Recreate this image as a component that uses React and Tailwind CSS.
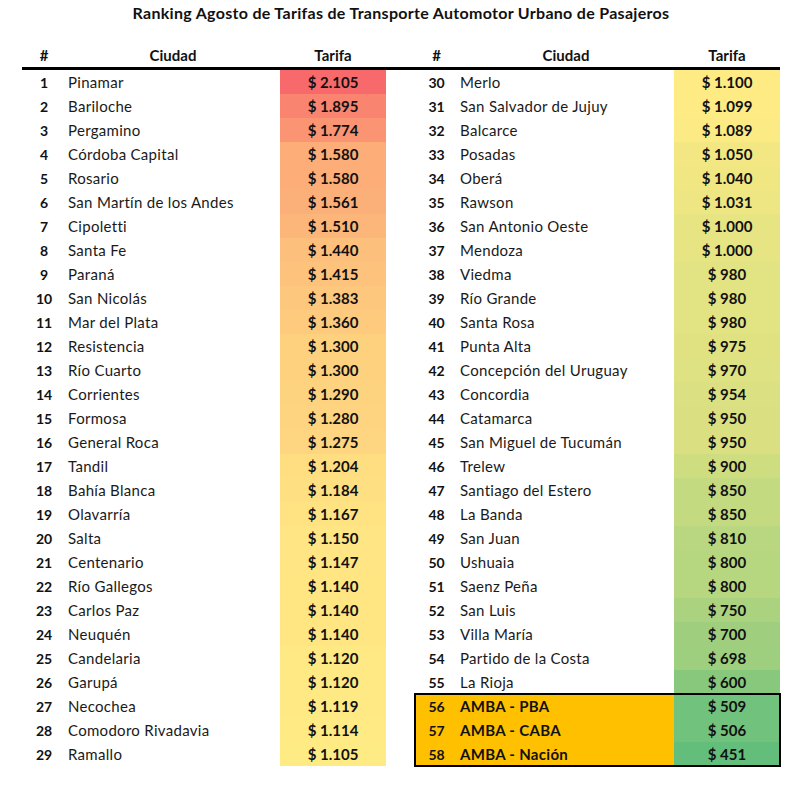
import React from "react";

const data = [
  [1, "Pinamar", 2105],
  [2, "Bariloche", 1895],
  [3, "Pergamino", 1774],
  [4, "Córdoba Capital", 1580],
  [5, "Rosario", 1580],
  [6, "San Martín de los Andes", 1561],
  [7, "Cipoletti", 1510],
  [8, "Santa Fe", 1440],
  [9, "Paraná", 1415],
  [10, "San Nicolás", 1383],
  [11, "Mar del Plata", 1360],
  [12, "Resistencia", 1300],
  [13, "Río Cuarto", 1300],
  [14, "Corrientes", 1290],
  [15, "Formosa", 1280],
  [16, "General Roca", 1275],
  [17, "Tandil", 1204],
  [18, "Bahía Blanca", 1184],
  [19, "Olavarría", 1167],
  [20, "Salta", 1150],
  [21, "Centenario", 1147],
  [22, "Río Gallegos", 1140],
  [23, "Carlos Paz", 1140],
  [24, "Neuquén", 1140],
  [25, "Candelaria", 1120],
  [26, "Garupá", 1120],
  [27, "Necochea", 1119],
  [28, "Comodoro Rivadavia", 1114],
  [29, "Ramallo", 1105],
  [30, "Merlo", 1100],
  [31, "San Salvador de Jujuy", 1099],
  [32, "Balcarce", 1089],
  [33, "Posadas", 1050],
  [34, "Oberá", 1040],
  [35, "Rawson", 1031],
  [36, "San Antonio Oeste", 1000],
  [37, "Mendoza", 1000],
  [38, "Viedma", 980],
  [39, "Río Grande", 980],
  [40, "Santa Rosa", 980],
  [41, "Punta Alta", 975],
  [42, "Concepción del Uruguay", 970],
  [43, "Concordia", 954],
  [44, "Catamarca", 950],
  [45, "San Miguel de Tucumán", 950],
  [46, "Trelew", 900],
  [47, "Santiago del Estero", 850],
  [48, "La Banda", 850],
  [49, "San Juan", 810],
  [50, "Ushuaia", 800],
  [51, "Saenz Peña", 800],
  [52, "San Luis", 750],
  [53, "Villa María", 700],
  [54, "Partido de la Costa", 698],
  [55, "La Rioja", 600],
  [56, "AMBA - PBA", 509],
  [57, "AMBA - CABA", 506],
  [58, "AMBA - Nación", 451],
];

const MIN = 451;
const MAX = 2105;
const MID = 1102.5;
const RED = [248, 105, 107];
const YEL = [255, 235, 132];
const GRN = [99, 190, 123];

function mix(a, b, t) {
  return a.map((v, i) => Math.round(v + (b[i] - v) * t));
}

function colorFor(v) {
  let c;
  if (v >= MID) c = mix(YEL, RED, (v - MID) / (MAX - MID));
  else c = mix(YEL, GRN, (MID - v) / (MID - MIN));
  return `rgb(${c[0]},${c[1]},${c[2]})`;
}

function fmt(v) {
  const s = String(v);
  if (s.length > 3) return "$ " + s.slice(0, s.length - 3) + "." + s.slice(-3);
  return "$ " + s;
}

const font = { fontFamily: "Lato, 'Open Sans', sans-serif" };

function Row({ n, city, v, amba, right }) {
  return (
    <div
      className={
        right
          ? "grid grid-cols-[43px_216px_106px] h-[24px] items-center"
          : "grid grid-cols-[44px_214px_106px] h-[24px] items-center"
      }
    >
      <div
        className={
          "h-full flex items-center justify-center text-[14px] font-bold text-[#111] " +
          (amba ? "bg-[#FFC000]" : "")
        }
      >
        {n}
      </div>
      <div
        className={
          "h-full flex items-center pl-[2px] text-[15px] tracking-[0.3px] text-[#1a1a1a] whitespace-nowrap " +
          (amba ? "bg-[#FFC000] font-bold text-[#111]" : "font-normal")
        }
      >
        {city}
      </div>
      <div
        className="h-full flex items-center justify-center text-[15px] font-bold text-[#111]"
        style={{ backgroundColor: colorFor(v) }}
      >
        {fmt(v)}
      </div>
    </div>
  );
}

export default function App() {
  const left = data.slice(0, 29);
  const rightNormal = data.slice(29, 55);
  const amba = data.slice(55);
  return (
    <div className="w-[802px] h-[788px] bg-white" style={font}>
      <div className="h-[44px] pt-[2px] text-center text-[16px] tracking-[0.3px] font-bold leading-[22px] text-[#111]">
        Ranking Agosto de Tarifas de Transporte Automotor Urbano de Pasajeros
      </div>
      <div className="px-[22px]">
        <div className="grid grid-cols-[44px_214px_106px_29px_43px_216px_106px] h-[26px] border-b-[3px] border-black text-[15px] font-bold text-[#111] leading-[23px]">
          <div className="text-center">#</div>
          <div className="text-center">Ciudad</div>
          <div className="text-center">Tarifa</div>
          <div></div>
          <div className="text-center">#</div>
          <div className="text-center">Ciudad</div>
          <div className="text-center">Tarifa</div>
        </div>
        <div className="flex gap-[29px]">
          <div className="flex flex-col">
            {left.map(([n, c, v]) => (
              <Row key={n} n={n} city={c} v={v} />
            ))}
          </div>
          <div className="flex flex-col">
            {rightNormal.map(([n, c, v]) => (
              <Row key={n} n={n} city={c} v={v} right />
            ))}
            <div className="outline-2 outline-black -outline-offset-1">
              {amba.map(([n, c, v]) => (
                <Row key={n} n={n} city={c} v={v} right amba />
              ))}
            </div>
          </div>
        </div>
      </div>
    </div>
  );
}
